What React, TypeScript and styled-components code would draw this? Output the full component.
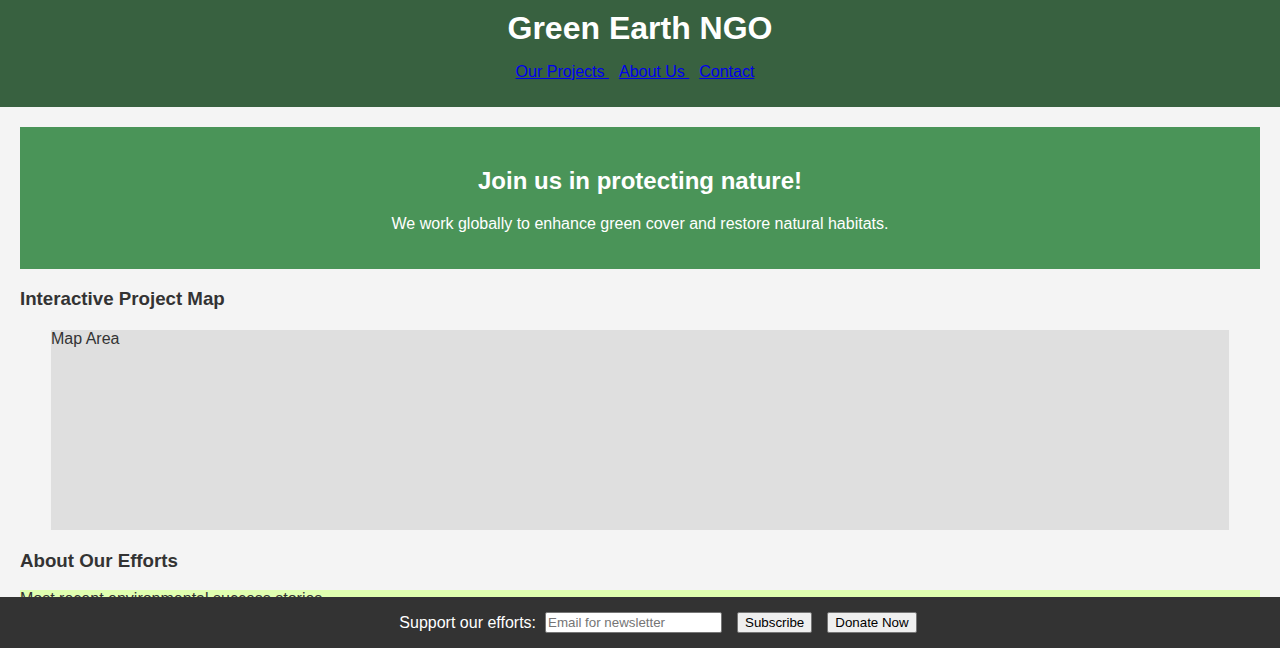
import React from "react";
import styled, { createGlobalStyle } from "styled-components";

const Global = createGlobalStyle`
  html, body { margin: 0; padding: 0; }
  body {
    font-family: "Liberation Sans", Arial, sans-serif;
    background: #f4f4f4;
    color: #333;
    line-height: normal;
  }
`;

const Header = styled.header`
  background: #386140;
  color: #fff;
  text-align: center;
  padding: 10px 0;
`;

const Title = styled.h1`
  margin: 0;
  font-size: 32px;
  font-weight: bold;
`;

const Nav = styled.nav`
  margin: 16px 0;
  font-size: 16px;
`;

const NavLink = styled.a`
  color: #0000ee;
  text-decoration: underline;
  margin-right: 10px;
`;

const Main = styled.main`
  padding: 20px;
  padding-bottom: 80px;
`;

const Hero = styled.section`
  background: #4a9458;
  color: #fff;
  text-align: center;
  padding: 20px;
`;

const HeroTitle = styled.h2`
  font-size: 24px;
  margin: 20px 0;
`;

const HeroText = styled.p`
  font-size: 16px;
  margin: 16px 0;
`;

const SectionTitle = styled.h3`
  font-size: 18.72px;
  margin: 18.72px 0;
  color: #333;
`;

const MapBox = styled.div`
  width: 95%;
  height: 200px;
  margin: 20px auto;
  background: #dfdfdf;
  font-size: 16px;
`;

const Stories = styled.div`
  background: #e0ffb0;
  font-size: 16px;
  padding-bottom: 40px;
`;

const Footer = styled.footer`
  position: fixed;
  left: 0;
  right: 0;
  bottom: 0;
  height: 51px;
  padding-left: 36px;
  background: #333;
  color: #fff;
  display: flex;
  align-items: center;
  justify-content: center;
  font-size: 16px;
`;

const FooterLabel = styled.span`
  margin-right: 9px;
`;

const EmailInput = styled.input`
  font-family: "Liberation Sans", Arial, sans-serif;
  font-size: 13.333px;
  width: 171px;
  height: 17px;
  padding: 1px 2px;
  border: 1px solid #767676;
  border-radius: 2px;
  margin-right: 15px;
  background: #fff;
  &::placeholder { color: #757575; }
`;

const Button = styled.button<{ $last?: boolean }>`
  font-family: "Liberation Sans", Arial, sans-serif;
  font-size: 13.333px;
  height: 21px;
  padding: 1px 7px;
  border: 1px solid #767676;
  border-radius: 2px;
  background: #efefef;
  color: #000;
  margin-right: ${(p) => (p.$last ? "0" : "15px")};
`;

export default function App() {
  return (
    <>
      <Global />
      <Header>
        <Title>Green Earth NGO</Title>
        <Nav>
          <NavLink href="#">Our Projects </NavLink><NavLink href="#">About Us </NavLink><NavLink href="#">Contact</NavLink>
        </Nav>
      </Header>
      <Main>
        <Hero>
          <HeroTitle>Join us in protecting nature!</HeroTitle>
          <HeroText>We work globally to enhance green cover and restore natural habitats.</HeroText>
        </Hero>
        <SectionTitle>Interactive Project Map</SectionTitle>
        <MapBox>Map Area</MapBox>
        <SectionTitle>About Our Efforts</SectionTitle>
        <Stories>Most recent environmental success stories</Stories>
      </Main>
      <Footer>
        <FooterLabel>Support our efforts:</FooterLabel>
        <EmailInput type="email" placeholder="Email for newsletter" />
        <Button>Subscribe</Button>
        <Button $last>Donate Now</Button>
      </Footer>
    </>
  );
}
